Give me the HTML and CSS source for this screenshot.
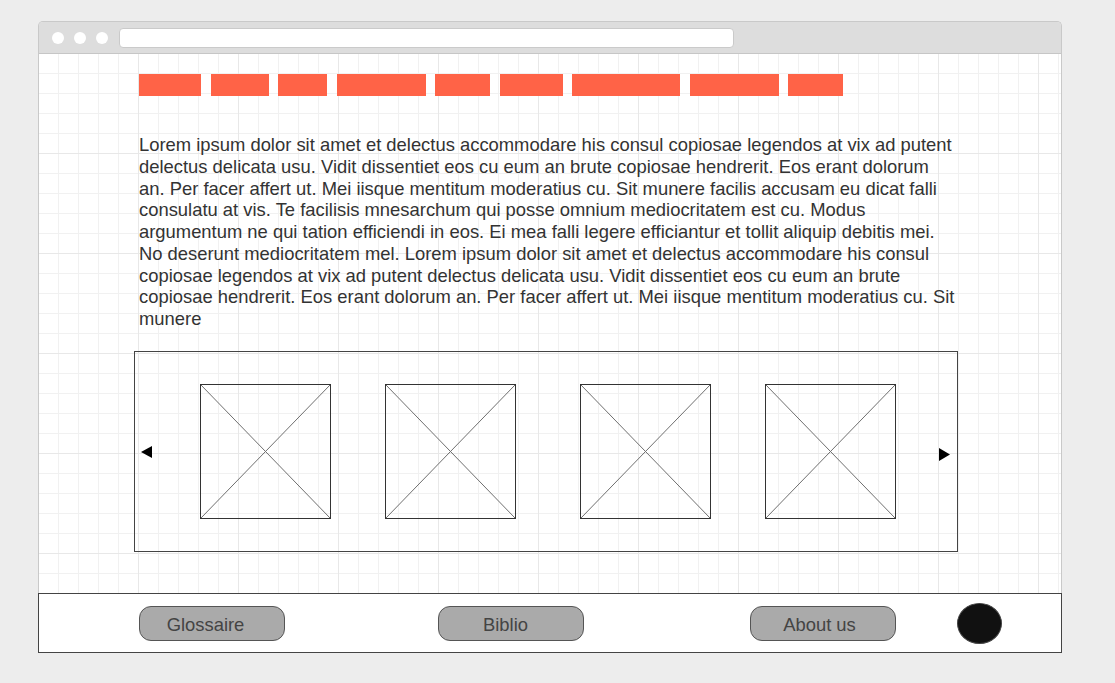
FILE: index.html
```html
<!DOCTYPE html>
<html lang="fr">
<head>
<meta charset="utf-8">
<title>Wireframe</title>
<link rel="stylesheet" href="styles.css">
</head>
<body>
<div class="window">
  <div class="chrome">
    <span class="dot"></span>
    <span class="dot"></span>
    <span class="dot"></span>
    <span class="address"></span>
  </div>
  <main class="content">
    <nav class="menu">
      <span class="tab" style="width:62px"></span>
      <span class="tab" style="width:58px"></span>
      <span class="tab" style="width:49px"></span>
      <span class="tab" style="width:89px"></span>
      <span class="tab" style="width:55px"></span>
      <span class="tab" style="width:63px"></span>
      <span class="tab" style="width:108px"></span>
      <span class="tab" style="width:89px"></span>
      <span class="tab" style="width:55px"></span>
    </nav>
    <p class="lorem">Lorem ipsum dolor sit amet et delectus accommodare his consul copiosae legendos at vix ad putent delectus delicata usu. Vidit dissentiet eos cu eum an brute copiosae hendrerit. Eos erant dolorum an. Per facer affert ut. Mei iisque mentitum moderatius cu. Sit munere facilis accusam eu dicat falli consulatu at vis. Te facilisis mnesarchum qui posse omnium mediocritatem est cu. Modus argumentum ne qui tation efficiendi in eos. Ei mea falli legere efficiantur et tollit aliquip debitis mei. No deserunt mediocritatem mel. Lorem ipsum dolor sit amet et delectus accommodare his consul copiosae legendos at vix ad putent delectus delicata usu. Vidit dissentiet eos cu eum an brute copiosae hendrerit. Eos erant dolorum an. Per facer affert ut. Mei iisque mentitum moderatius cu. Sit munere</p>
    <section class="carousel">
      <svg class="arrow arrow-left" width="11" height="12" viewBox="0 0 11 12"><polygon points="11,0 11,12 0,6" fill="#000"/></svg>
      <div class="slide"><svg viewBox="0 0 100 100" preserveAspectRatio="none"><line x1="0" y1="0" x2="100" y2="100"/><line x1="100" y1="0" x2="0" y2="100"/></svg></div>
      <div class="slide"><svg viewBox="0 0 100 100" preserveAspectRatio="none"><line x1="0" y1="0" x2="100" y2="100"/><line x1="100" y1="0" x2="0" y2="100"/></svg></div>
      <div class="slide slide-wide"><svg viewBox="0 0 100 100" preserveAspectRatio="none"><line x1="0" y1="0" x2="100" y2="100"/><line x1="100" y1="0" x2="0" y2="100"/></svg></div>
      <div class="slide"><svg viewBox="0 0 100 100" preserveAspectRatio="none"><line x1="0" y1="0" x2="100" y2="100"/><line x1="100" y1="0" x2="0" y2="100"/></svg></div>
      <svg class="arrow arrow-right" width="11" height="13" viewBox="0 0 11 13"><polygon points="0,0 11,6.5 0,13" fill="#000"/></svg>
    </section>
  </main>
  <footer class="footer">
    <button class="pill pill-glossaire">Glossaire</button>
    <button class="pill pill-biblio">Biblio</button>
    <button class="pill pill-about">About us</button>
    <span class="avatar"></span>
  </footer>
</div>
</body>
</html>
```

FILE: styles.css
```css
html, body {
  margin: 0;
  padding: 0;
}

body {
  background: #ededed;
  font-family: "Liberation Sans", Arial, sans-serif;
  width: 1115px;
  height: 683px;
  overflow: hidden;
}

.window {
  margin: 21px 0 0 38px;
  width: 1024px;
  height: 632px;
  box-sizing: border-box;
  border: 1px solid #c9c9c9;
  border-bottom: none;
  border-radius: 5px 5px 0 0;
  display: flex;
  flex-direction: column;
}

.chrome {
  height: 31px;
  background: #dddddd;
  border-bottom: 1px solid #c6c6c6;
  border-radius: 4px 4px 0 0;
  display: flex;
  align-items: center;
  padding-left: 13px;
  gap: 10px;
}

.dot {
  width: 12px;
  height: 12px;
  border-radius: 50%;
  background: #fff;
  flex: none;
}

.address {
  margin-left: 1px;
  width: 613px;
  height: 18px;
  background: #fff;
  border: 1px solid #cacaca;
  border-radius: 4px;
  flex: none;
  margin-top: 1px;
}

.content {
  flex: 1;
  background-color: #fff;
  background-image:
    linear-gradient(to right, transparent 99px, #e8e8e8 99px),
    linear-gradient(to bottom, transparent 99px, #e8e8e8 99px),
    linear-gradient(to right, transparent 19px, #f1f1f1 19px),
    linear-gradient(to bottom, transparent 19px, #f1f1f1 19px);
  background-size: 100px 100%, 100% 100px, 20px 100%, 100% 20px;
  padding: 20px 0 0 100px;
  display: flex;
  flex-direction: column;
  align-items: flex-start;
}

.menu {
  display: flex;
  gap: 9.5px;
  height: 22px;
}

.tab {
  display: block;
  height: 22px;
  background: #ff6347;
}

.lorem {
  margin: 38px 0 0 0;
  width: 819px;
  font-size: 18.4px;
  line-height: 21.75px;
  color: #333;
}

.carousel {
  margin: 21px 0 0 -5px;
  width: 824px;
  height: 201px;
  box-sizing: border-box;
  border: 1px solid #444;
  display: flex;
  align-items: center;
  padding-left: 6px;
}

.arrow {
  flex: none;
  display: block;
}

.arrow-left {
  margin-top: 1px;
}

.arrow-right {
  margin-left: 43px;
  margin-top: 7px;
}

.slide {
  width: 131px;
  height: 135px;
  box-sizing: border-box;
  border: 1px solid #333;
  margin-left: 54px;
  flex: none;
}

.arrow-left + .slide {
  margin-left: 48px;
}

.slide-wide {
  margin-left: 64px;
}

.slide svg {
  display: block;
  width: 100%;
  height: 100%;
}

.slide line {
  stroke: #6f6f6f;
  stroke-width: 1;
  vector-effect: non-scaling-stroke;
}

.footer {
  margin: 0 -1px;
  height: 60px;
  box-sizing: border-box;
  background: #fff;
  border: 1px solid #444;
  display: flex;
  align-items: center;
  padding-left: 100px;
}

.pill {
  width: 146px;
  height: 35px;
  box-sizing: border-box;
  background: #aaaaaa;
  border: 1px solid #555;
  border-radius: 12px;
  font-family: "Liberation Sans", Arial, sans-serif;
  font-size: 18.4px;
  color: #444;
  padding: 3px 13px 0 0;
  flex: none;
}

.pill-biblio {
  margin-left: 153px;
  padding-right: 11px;
}

.pill-about {
  margin-left: 166px;
  padding-right: 7px;
}

.avatar {
  margin-left: 61px;
  width: 45px;
  height: 41px;
  box-sizing: border-box;
  border-radius: 50%;
  background: #111;
  border: 1px solid #444;
  flex: none;
}
```
